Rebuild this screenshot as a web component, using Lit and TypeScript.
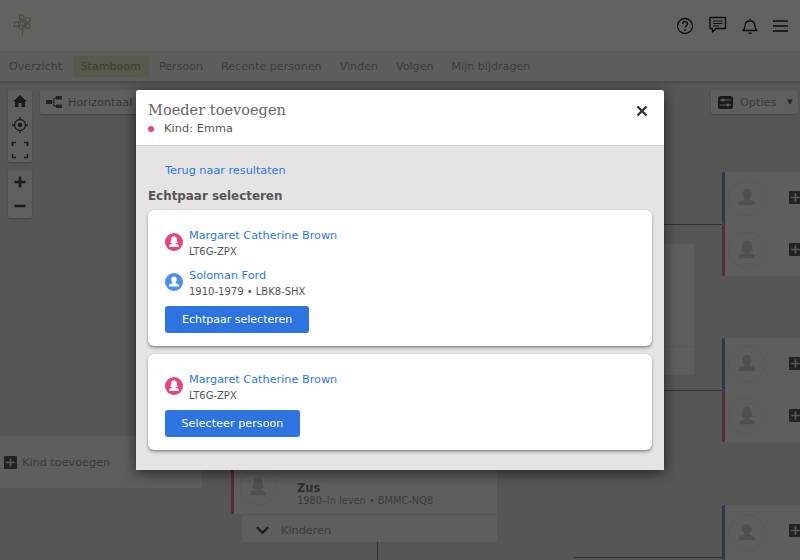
import { LitElement, html, css } from "lit";
import { customElement } from "lit/decorators.js";

const personPath = "M12 4.500c-2.300 0-3.800 1.800-3.800 4.100 0 1.500.6 2.800 1.700 3.600v1.300c-2.400.5-4.700 1.500-4.700 3.200v1.300h13.600v-1.300c0-1.700-2.300-2.700-4.700-3.200v-1.300c1.100-.8 1.700-2.100 1.700-3.600 0-2.300-1.500-4.100-3.800-4.100z";
const femalePath = "M12 4.200c-2.600 0-3.900 2-3.900 4.300 0 1.700-.5 3-1.300 4 1 .7 2.200 1 3.200 1.100v.8c-2.300.5-4.400 1.400-4.400 3.100v1.300h12.800v-1.300c0-1.700-2.100-2.600-4.400-3.100v-.8c1-.1 2.200-.4 3.200-1.100-.8-1-1.300-2.300-1.300-4 0-2.300-1.300-4.300-3.900-4.300z";

type TreeNode = { x: number; y: number; w: number; h: number; g: "m" | "f" };
const nodes: TreeNode[] = [
  { x: 722, y: 172, w: 90, h: 52, g: "m" },
  { x: 722, y: 224, w: 90, h: 52, g: "f" },
  { x: 722, y: 338, w: 90, h: 52, g: "m" },
  { x: 722, y: 390, w: 90, h: 52, g: "f" },
  { x: 722, y: 505, w: 90, h: 55, g: "m" },
];
const lines = [
  { x: 640, y: 224, w: 82, h: 1 },
  { x: 640, y: 390, w: 82, h: 1 },
  { x: 574, y: 557, w: 148, h: 1 },
  { x: 377, y: 542, w: 1, h: 18 },
];

const badge = (g: string, color: string) => html`
  <svg width="18" height="18" viewBox="0 0 24 24">
    <circle cx="12" cy="12" r="12" fill=${color}></circle>
    <path d=${g === "f" ? femalePath : personPath} fill="#fff"></path>
  </svg>`;

const ghost = (g: string) => html`
  <svg width="38" height="38" viewBox="0 0 38 38">
    <circle cx="19" cy="19" r="18" fill="none" stroke="#e0e0dc" stroke-width="1"></circle>
    <g transform="translate(4.600 4.600) scale(1.200)">
      <path d=${g === "f" ? femalePath : personPath} fill="#c9c9c5"></path>
    </g>
  </svg>`;

@customElement("app-root")
export class AppRoot extends LitElement {
  static styles = css`
    :host { display: block; width: 800px; height: 560px; position: relative; overflow: hidden;
      font-family: "DejaVu Sans", sans-serif; background: #d6d6d1; color: #333; }
    .page { display: flex; flex-direction: column; height: 560px; }
    .top { height: 51px; flex: none; background: #f5f5f2; border-bottom: 1px solid #ecece8; display: flex; align-items: center; justify-content: space-between; padding: 0 11px 0 13px; box-sizing: content-box; }
    .icons { display: flex; align-items: center; gap: 15px; }
    .icons svg { display: block; }
    .nav { height: 29px; flex: none; background: #e9e9e5; display: flex; align-items: center; font-size: 11.100px; color: #999995; box-shadow: 0 1px 3px rgba(0,0,0,.2); position: relative; }
    .nav span { padding: 3px 9px; line-height: 15px; white-space: nowrap; }
    .nav span.active { background: #dcdfc0; border-radius: 2px; padding: 3px 8px; color: #9a9e85; margin-left: 1.500px; margin-right: 1px; }
    .canvas { flex: 1; position: relative; }
    .tools { position: absolute; left: 8px; top: 9px; display: flex; flex-direction: column; gap: 8px; }
    .toolbox { width: 24px; background: #eeeeea; border-radius: 3px; box-shadow: 0 1px 2px rgba(0,0,0,.2); display: flex; flex-direction: column; align-items: center; }
    .toolbox svg { display: block; }
    .hbtn { position: absolute; left: 40px; top: 9px; width: 110px; height: 24px; box-sizing: border-box; background: #eeeeea; border-radius: 3px; box-shadow: 0 1px 2px rgba(0,0,0,.2); display: flex; align-items: center; gap: 6px; padding-left: 6px; font-size: 11.250px; color: #8f8f8b; }
    .opts { position: absolute; left: 711px; top: 9px; width: 87px; height: 24px; box-sizing: border-box; background: #eeeeea; border-radius: 3px; box-shadow: 0 1px 2px rgba(0,0,0,.2); display: flex; align-items: center; padding-left: 7px; gap: 7px; font-size: 11.250px; color: #999995; }
    .opts i { font-style: normal; font-size: 7px; margin-left: 4px; color: #555; }
    .line { position: absolute; background: #808080; }
    .node { position: absolute; background: #ebebe7; border-left: 3px solid; box-sizing: border-box; display: flex; align-items: center; padding-left: 3px; border-radius: 2px 0 0 2px; }
    .node.m { border-color: #6f8bc8; }
    .node.f { border-color: #d0708f; }
    .plus { position: absolute; left: 64px; top: 19px; width: 13px; height: 13px; border-radius: 1px; background: #555; display: flex; align-items: center; justify-content: center; }
    .panel { position: absolute; background: #ebebe7; border-radius: 2px; }
    .kind { left: -10px; top: 355px; width: 212px; height: 52px; display: flex; align-items: center; gap: 5px; padding-left: 14px; box-sizing: border-box; font-size: 11.250px; color: #999995; }
    .kind b { width: 13px; height: 13px; background: #555; display: flex; align-items: center; justify-content: center; border-radius: 1px; }
    .side { left: 640px; top: 163px; width: 54px; height: 131px; display: flex; flex-direction: column; justify-content: flex-end; }
    .side div { height: 28px; border-top: 1px solid #dededa; }
    .zus { left: 231px; top: 379px; width: 266px; height: 54px; border-left: 3px solid #d0708f; display: flex; align-items: center; box-sizing: border-box; padding-left: 5px; gap: 20px; }
    .zus-text { font-size: 9.800px; color: #999995; margin-top: 13px; }
    .zus-text b { display: block; font-size: 11.500px; color: #777; line-height: 14px; }
    .kinderen { left: 242px; top: 434px; width: 255px; height: 27px; display: flex; align-items: center; gap: 11px; padding: 3px 0 0 13px; box-sizing: border-box; font-size: 11.250px; color: #999995; }
    .overlay { position: absolute; inset: 0; background: rgba(0,0,0,.6); }
    .modal { position: absolute; left: 136px; top: 90px; width: 528px; height: 380px; background: #e5e4e2; border-radius: 3px 3px 0 0; box-shadow: 0 3px 14px rgba(0,0,0,.6); display: flex; flex-direction: column; }
    .mhead { height: 55px; flex: none; box-sizing: content-box; background: #fff; border-bottom: 1px solid #cfcfcd; border-radius: 3px 3px 0 0; padding: 0 12px; position: relative; }
    .title { font-family: "DejaVu Serif", serif; font-size: 14.500px; color: #666; margin-top: 11px; line-height: 18px; letter-spacing: .03px; }
    .sub { display: flex; align-items: center; font-size: 11.250px; color: #555; line-height: 16px; margin-top: 2px; letter-spacing: .1px; }
    .dot { width: 6px; height: 6px; background: #e8437c; border-radius: 50%; margin-right: 10px; margin-top: -1px; }
    .close { position: absolute; right: 16px; top: 15px; display: block; }
    .mbody { padding: 0 12px; flex: 1; }
    .back { display: block; margin: 17px 0 0 17px; font-size: 11.250px; line-height: 16px; color: #2a7ae4; }
    h3 { margin: 9px 0 0; font-size: 11.900px; line-height: 16px; color: #555; font-weight: bold; }
    .card { background: #fff; border-radius: 6px; box-shadow: 0 2px 3px rgba(0,0,0,.35), 0 0 1px rgba(0,0,0,.2); padding: 18px 17px 13px; margin-top: 8px; }
    .card:first-of-type { margin-top: 6px; }
    .person { display: flex; align-items: center; gap: 6px; margin-bottom: 9px; }
    .person.last { margin-bottom: 7px; }
    .person svg { flex: none; display: block; margin-top: -4px; }
    .pname { font-size: 11.250px; color: #2a7ae4; line-height: 15px; }
    .pmeta { font-size: 10px; color: #555; line-height: 15px; margin-top: 1px; }
    button { display: block; height: 27px; border: 0; border-radius: 3px; background: #2d74e0; color: #fff; font: 11px "DejaVu Sans", sans-serif; padding: 0 17px; }
    button.narrow { padding: 0 16.500px; letter-spacing: .12px; }
  `;

  private plus(s: number) {
    return html`<svg width=${s} height=${s} viewBox="0 0 12 12"><path d="M6 2v8M2 6h8" stroke="#ddd" stroke-width="1.500"></path></svg>`;
  }

  render() {
    return html`
      <div class="page">
        <div class="top">
          <svg width="19" height="25" viewBox="0 0 22 28">
            <g fill="none" stroke="#bcc39c" stroke-width="1.400">
              <path d="M11 26c0-5 1-8 0-13M11 20c-2-2-4-3-5-6M12 17c2-1 4-3 5-6"></path>
              <rect x="1.500" y="10" width="5" height="5"></rect><rect x="7.500" y="2" width="5" height="5"></rect>
              <rect x="14" y="5" width="6" height="5"></rect><rect x="8" y="9" width="5" height="5"></rect>
              <rect x="14" y="12" width="5" height="5"></rect>
            </g>
          </svg>
          <div class="icons">
            <svg width="18" height="18" viewBox="0 0 18 18"><circle cx="9" cy="9" r="7.500" fill="none" stroke="#222" stroke-width="1.300"></circle><path d="M6.500 7c0-1.500 1.100-2.400 2.500-2.400s2.500.9 2.500 2.200c0 1.900-2.500 1.900-2.500 3.700" fill="none" stroke="#222" stroke-width="1.300"></path><circle cx="9" cy="13" r=".9" fill="#222"></circle></svg>
            <svg width="18" height="18" viewBox="0 0 18 18" style="margin-top:-1px"><path d="M1 1.500h15.500v11H7l-3.500 3.500v-3.500H1z" fill="none" stroke="#222" stroke-width="1.400" stroke-linejoin="round"></path><path d="M4 5h9.500M4 7.500h9.500M4 10h6" stroke="#222" stroke-width="1.200"></path></svg>
            <svg width="16" height="18" viewBox="0 0 16 18"><path d="M1 13.500c1.500-1 2-2 2-4.500 0-3 2-5 5-5s5 2 5 5c0 2.500.5 3.500 2 4.500z" fill="none" stroke="#222" stroke-width="1.300" stroke-linejoin="round"></path><path d="M6 15.500a2 1.500 0 0 0 4 0z" fill="#222"></path><path d="M8 2v2" stroke="#222" stroke-width="1.300"></path></svg>
            <svg width="16" height="12" viewBox="0 0 16 12"><path d="M0 1h15M0 6h15M0 11h15" stroke="#222" stroke-width="1.300"></path></svg>
          </div>
        </div>
        <div class="nav">
          <span>Overzicht</span><span class="active">Stamboom</span><span>Persoon</span><span>Recente personen</span><span>Vinden</span><span>Volgen</span><span>Mijn bijdragen</span>
        </div>
        <div class="canvas">
          ${lines.map(l => html`<div class="line" style="left:${l.x}px;top:${l.y - 81}px;width:${l.w}px;height:${l.h}px"></div>`)}
          <div class="tools">
            <div class="toolbox" style="height:72px;justify-content:space-around">
              <svg width="16" height="16" viewBox="0 0 16 16"><path d="M8 2L1 8.500h2V14h3.500v-4h3v4H13V8.500h2z" fill="#444"></path></svg>
              <svg width="18" height="18" viewBox="0 0 18 18"><circle cx="9" cy="9" r="5.500" fill="none" stroke="#444" stroke-width="1.300"></circle><circle cx="9" cy="9" r="2.200" fill="#444"></circle><path d="M9 1v3M9 14v3M1 9h3M14 9h3" stroke="#444" stroke-width="1.300"></path></svg>
              <svg width="18" height="18" viewBox="0 0 18 18"><path d="M1.500 5V1.500H5M13 1.500h3.500V5M16.500 13v3.500H13M5 16.500H1.500V13" fill="none" stroke="#444" stroke-width="1.500"></path></svg>
            </div>
            <div class="toolbox" style="height:48px;justify-content:space-around">
              <svg width="14" height="14" viewBox="0 0 14 14"><path d="M1.500 7h11M7 1.500v11" stroke="#444" stroke-width="2.600"></path></svg>
              <svg width="14" height="14" viewBox="0 0 14 14"><path d="M1.500 7h11" stroke="#444" stroke-width="2.600"></path></svg>
            </div>
          </div>
          <div class="hbtn">
            <svg width="16" height="12" viewBox="0 0 16 12"><rect x="0" y="4" width="6" height="4" fill="#555"></rect><rect x="10" y="0" width="6" height="3.500" fill="#555"></rect><rect x="10" y="8.500" width="6" height="3.500" fill="#555"></rect><path d="M6 6h2M8 2v8M8 2h2M8 10h2" stroke="#555" fill="none"></path></svg>
            Horizontaal
          </div>
          <div class="opts">
            <svg width="15" height="13" viewBox="0 0 15 13"><rect width="15" height="13" rx="2.500" fill="#444"></rect><path d="M2 4h11M2 9h11" stroke="#eee"></path><circle cx="5" cy="4" r="1.500" fill="#eee"></circle><circle cx="10" cy="9" r="1.500" fill="#eee"></circle></svg>
            Opties <i>▼</i>
          </div>
          ${nodes.map(n => html`
            <div class="node ${n.g}" style="left:${n.x}px;top:${n.y - 81}px;width:${n.w}px;height:${n.h}px">
              ${ghost(n.g)}
              <div class="plus">${this.plus(13)}</div>
            </div>`)}
          <div class="panel side"><div></div></div>
          <div class="panel kind"><b>${this.plus(13)}</b>Kind toevoegen</div>
          <div class="panel zus">
            ${ghost("f")}
            <div class="zus-text"><b>Zus</b>1980–In leven • BMMC-NQ8</div>
          </div>
          <div class="panel kinderen">
            <svg width="15" height="10" viewBox="0 0 16 10"><path d="M2 2l6 6 6-6" fill="none" stroke="#444" stroke-width="2.400"></path></svg>
            Kinderen
          </div>
        </div>
      </div>
      <div class="overlay"></div>
      <div class="modal">
        <div class="mhead">
          <div class="title">Moeder toevoegen</div>
          <div class="sub"><span class="dot"></span>Kind: Emma</div>
          <svg class="close" width="12" height="12" viewBox="0 0 12 12"><path d="M1.500 1.500l9 9M10.500 1.500l-9 9" stroke="#333" stroke-width="2.400"></path></svg>
        </div>
        <div class="mbody">
          <a class="back">Terug naar resultaten</a>
          <h3>Echtpaar selecteren</h3>
          <div class="card">
            <div class="person">
              ${badge("f", "#e8437c")}
              <div><div class="pname">Margaret Catherine Brown</div><div class="pmeta">LT6G-ZPX</div></div>
            </div>
            <div class="person last">
              ${badge("m", "#4a90ee")}
              <div><div class="pname">Soloman Ford</div><div class="pmeta">1910-1979 • LBK8-SHX</div></div>
            </div>
            <button>Echtpaar selecteren</button>
          </div>
          <div class="card">
            <div class="person last">
              ${badge("f", "#e8437c")}
              <div><div class="pname">Margaret Catherine Brown</div><div class="pmeta">LT6G-ZPX</div></div>
            </div>
            <button class="narrow">Selecteer persoon</button>
          </div>
        </div>
      </div>
    `;
  }
}
